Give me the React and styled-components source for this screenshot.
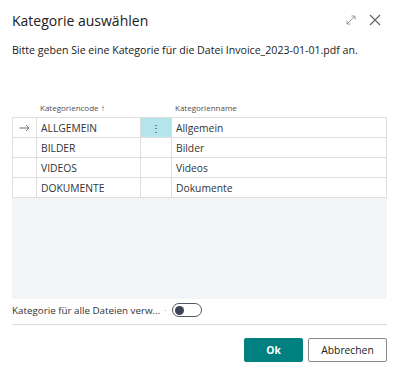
import React from 'react'
import styled, { createGlobalStyle } from 'styled-components'

const GlobalStyle = createGlobalStyle`
  html, body {
    margin: 0;
    padding: 0;
    background: #ffffff;
  }
  body {
    font-family: "Open Sans", "Noto Sans", sans-serif;
    color: #212121;
  }
`

const Dialog = styled.div`
  width: 400px;
  height: 373px;
  box-sizing: border-box;
  padding: 0 13px 0 12px;
  display: flex;
  flex-direction: column;
`

const Header = styled.header`
  display: flex;
  align-items: center;
  justify-content: space-between;
  height: 40px;
`

const Title = styled.h1`
  margin: 0;
  font-size: 14px;
  font-weight: 400;
  color: #212121;
`

const HeaderIcons = styled.div`
  display: flex;
  align-items: center;
  gap: 12px;
  margin-right: 6px;
`

const Message = styled.p`
  margin: 0;
  font-size: 10.6px;
  line-height: 20px;
  color: #212121;
`

const ColumnHeads = styled.div`
  display: grid;
  grid-template-columns: 25px 104px 31px 1fr;
  margin-top: 37px;
  height: 20px;
  align-items: center;
`

const HeadCell = styled.span`
  font-size: 8px;
  color: #505050;
  padding-left: 3px;
`

const Grid = styled.div`
  border-left: 1px solid #dedede;
  border-right: 1px solid #dedede;
  border-top: 1px solid #dedede;
`

const Row = styled.div`
  display: grid;
  grid-template-columns: 24px 104px 31px 1fr;
  height: 20px;
  border-bottom: 1px solid #dedede;
  box-sizing: border-box;
`

const Cell = styled.div`
  display: flex;
  align-items: center;
  padding-left: ${p => (p.$pad ? '4px' : '0')};
  justify-content: ${p => (p.$center ? 'center' : 'flex-start')};
  border-right: ${p => (p.$last ? 'none' : '1px solid #dedede')};
  background: ${p => (p.$active ? '#b3e5eb' : 'transparent')};
  font-size: 10.3px;
  color: #333333;
  white-space: nowrap;
  overflow: hidden;
`

const Empty = styled.div`
  height: 101px;
  background: #f4f5f7;
`

const ToggleRow = styled.div`
  display: flex;
  align-items: center;
  height: 22px;
`

const ToggleLabel = styled.span`
  flex-shrink: 0;
  font-size: 9.8px;
  color: #333333;
  width: 151px;
  white-space: nowrap;
`

const Dot = styled.span`
  width: 1px;
  height: 1px;
  background: #b0b0b0;
  margin: 0 6px 0 2px;
`

const Switch = styled.span`
  box-sizing: border-box;
  width: 30px;
  height: 14px;
  border: 1.5px solid #505866;
  border-radius: 7px;
  display: flex;
  align-items: center;
  padding-left: 2px;
`

const Knob = styled.span`
  width: 9px;
  height: 9px;
  border-radius: 50%;
  background: #3a4456;
`

const Divider = styled.hr`
  margin: 3px 0 0 0;
  border: none;
  border-top: 1px solid #dcdcdc;
`

const Footer = styled.footer`
  display: flex;
  justify-content: flex-end;
  gap: 5px;
  margin-top: 13px;
`

const Button = styled.button`
  box-sizing: border-box;
  height: 24px;
  width: ${p => p.$w}px;
  font-family: "Open Sans", "Noto Sans", sans-serif;
  font-size: 10.3px;
  font-weight: ${p => (p.$primary ? 700 : 400)};
  color: ${p => (p.$primary ? '#ffffff' : '#212121')};
  background: ${p => (p.$primary ? '#00817f' : '#ffffff')};
  border: 1px solid ${p => (p.$primary ? '#00817f' : '#8a8a8a')};
  border-radius: 2px;
  padding: 0;
`

const ExpandIcon = () => (
  <svg width="12" height="12" viewBox="0 0 12 12" fill="none" stroke="#9a9a9a" strokeWidth="1">
    <path d="M2 10 L10 2 M6.5 2 H10 V5.5 M2 6.5 V10 H5.5" />
  </svg>
)

const CloseIcon = () => (
  <svg width="12" height="12" viewBox="0 0 12 12" fill="none" stroke="#666" strokeWidth="1.2">
    <path d="M1 1 L11 11 M11 1 L1 11" />
  </svg>
)

const RowArrow = () => (
  <svg width="11" height="8" viewBox="0 0 11 8" fill="none" stroke="#707070" strokeWidth="1">
    <path d="M0.5 4 H10 M7 1 L10 4 L7 7" />
  </svg>
)

const rows = [
  { code: 'ALLGEMEIN', name: 'Allgemein' },
  { code: 'BILDER', name: 'Bilder' },
  { code: 'VIDEOS', name: 'Videos' },
  { code: 'DOKUMENTE', name: 'Dokumente' },
]

export default function App() {
  return (
    <>
      <GlobalStyle />
      <Dialog>
        <Header>
          <Title>Kategorie auswählen</Title>
          <HeaderIcons>
            <ExpandIcon />
            <CloseIcon />
          </HeaderIcons>
        </Header>
        <Message>Bitte geben Sie eine Kategorie für die Datei Invoice_2023-01-01.pdf an.</Message>

        <ColumnHeads>
          <span />
          <HeadCell>Kategoriencode ↑</HeadCell>
          <span />
          <HeadCell>Kategorienname</HeadCell>
        </ColumnHeads>
        <Grid>
          {rows.map((r, i) => (
            <Row key={r.code}>
              <Cell $center>{i === 0 ? <RowArrow /> : null}</Cell>
              <Cell $pad>{r.code}</Cell>
              <Cell $center $active={i === 0}>{i === 0 ? '⋮' : ''}</Cell>
              <Cell $pad $last>{r.name}</Cell>
            </Row>
          ))}
        </Grid>
        <Empty />

        <ToggleRow>
          <ToggleLabel>Kategorie für alle Dateien verw...</ToggleLabel>
          <Dot />
          <Switch>
            <Knob />
          </Switch>
        </ToggleRow>
        <Divider />

        <Footer>
          <Button $primary $w={59}>Ok</Button>
          <Button $w={79}>Abbrechen</Button>
        </Footer>
      </Dialog>
    </>
  )
}
